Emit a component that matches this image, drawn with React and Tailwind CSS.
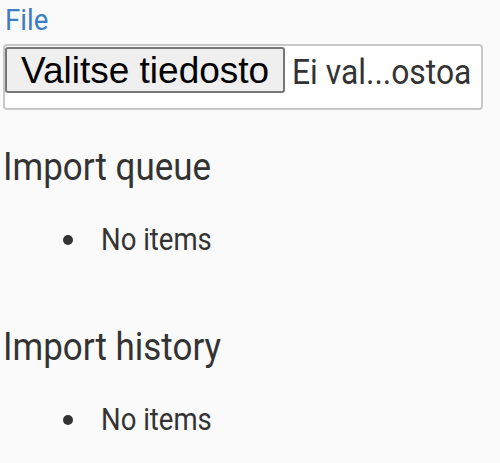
import React from 'react';

const roboto = "font-['Roboto',sans-serif]";

const Section = ({ title, className }) => (
  <section className={className}>
    <h2 className={`${roboto} text-[38px] leading-[46px] text-[#333]`}>
      <span className="inline-block origin-left scale-x-[0.92] whitespace-nowrap">{title}</span>
    </h2>
    <ul className={`${roboto} mt-[29px] text-[32px] leading-[40px] text-[#333]`}>
      <li className="flex items-start">
        <span className="mt-[16px] ml-[60px] w-[10px] h-[10px] rounded-full bg-[#333] shrink-0" />
        <span className="ml-[28px] inline-block origin-left scale-x-[0.86] whitespace-nowrap">No items</span>
      </li>
    </ul>
  </section>
);

const App = () => {
  return (
    <div className="min-h-[463px] w-full bg-[#fafafa] pl-[3px] pt-[4px]">
      <label className={`${roboto} block pl-[2px] text-[29px] leading-[32px] text-[#3b7dc4]`}>
        <span className="inline-block origin-left scale-x-[0.95]">File</span>
      </label>
      <div className="mt-[8px] w-[480px] h-[66px] border-2 border-[#c8c8c8] rounded-[4px] bg-white flex items-start overflow-hidden">
        <button
          type="button"
          className="mt-[1px] h-[46px] px-[14px] bg-[#efefef] border-2 border-[#767676] rounded-[3px] text-[37px] text-black font-['Liberation_Sans',Arial,sans-serif] leading-none whitespace-nowrap"
        >
          Valitse tiedosto
        </button>
        <span className={`${roboto} ml-[7px] mt-[6px] text-[35px] leading-[42px] text-[#333] whitespace-nowrap inline-block origin-left scale-x-[0.91]`}>
          Ei val...ostoa
        </span>
      </div>
      <Section title="Import queue" className="mt-[34px]" />
      <Section title="Import history" className="mt-[65px]" />
    </div>
  );
};

export default App;
